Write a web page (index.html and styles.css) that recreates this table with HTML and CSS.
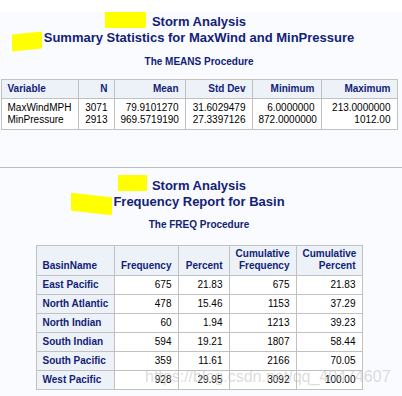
FILE: index.html
```html
<!DOCTYPE html>
<html>
<head>
<meta charset="utf-8">
<link rel="stylesheet" href="styles.css">
</head>
<body>
<div class="topstrip"></div>
<div class="page">
  <section class="block block-means">
    <div class="titles">
      <div class="title">Storm Analysis</div>
      <div class="title">Summary Statistics for MaxWind and MinPressure</div>
    </div>
    <div class="proc">The MEANS Procedure</div>
    <table class="tbl means">
      <colgroup>
        <col class="m1"><col class="m2"><col class="m3"><col class="m4"><col class="m5"><col class="m6">
      </colgroup>
      <thead>
        <tr>
          <th class="l">Variable</th>
          <th class="r">N</th>
          <th class="r">Mean</th>
          <th class="r">Std Dev</th>
          <th class="r">Minimum</th>
          <th class="r">Maximum</th>
        </tr>
      </thead>
      <tbody>
        <tr>
          <td class="l">MaxWindMPH<br>MinPressure</td>
          <td class="r">3071<br>2913</td>
          <td class="r">79.9101270<br>969.5719190</td>
          <td class="r">31.6029479<br>27.3397126</td>
          <td class="r">6.0000000<br>872.0000000</td>
          <td class="r">213.0000000<br>1012.00</td>
        </tr>
      </tbody>
    </table>
  </section>

  <hr class="sep">

  <section class="block block-freq">
    <div class="titles">
      <div class="title">Storm Analysis</div>
      <div class="title">Frequency Report for Basin</div>
    </div>
    <div class="proc">The FREQ Procedure</div>
    <table class="tbl freq">
      <colgroup>
        <col class="f1"><col class="f2"><col class="f3"><col class="f4"><col class="f5">
      </colgroup>
      <thead>
        <tr>
          <th class="l">BasinName</th>
          <th class="r">Frequency</th>
          <th class="r">Percent</th>
          <th class="r">Cumulative<br>Frequency</th>
          <th class="r">Cumulative<br>Percent</th>
        </tr>
      </thead>
      <tbody>
        <tr><th class="l rowh">East Pacific</th><td class="r">675</td><td class="r">21.83</td><td class="r">675</td><td class="r">21.83</td></tr>
        <tr><th class="l rowh">North Atlantic</th><td class="r">478</td><td class="r">15.46</td><td class="r">1153</td><td class="r">37.29</td></tr>
        <tr><th class="l rowh">North Indian</th><td class="r">60</td><td class="r">1.94</td><td class="r">1213</td><td class="r">39.23</td></tr>
        <tr><th class="l rowh">South Indian</th><td class="r">594</td><td class="r">19.21</td><td class="r">1807</td><td class="r">58.44</td></tr>
        <tr><th class="l rowh">South Pacific</th><td class="r">359</td><td class="r">11.61</td><td class="r">2166</td><td class="r">70.05</td></tr>
        <tr><th class="l rowh">West Pacific</th><td class="r">928</td><td class="r">29.95</td><td class="r">3092</td><td class="r">100.00</td></tr>
      </tbody>
    </table>
  </section>
</div>

<span class="mark mark-a"></span>
<span class="mark mark-b"></span>
<span class="mark mark-c"></span>
<span class="mark mark-d"></span>
<div class="watermark">https://blog.csdn.net/qq_40474607</div>
</body>
</html>
```

FILE: styles.css
```css
html, body {
  margin: 0;
  padding: 0;
}
body {
  position: relative;
  background: #fafbfe;
  font-family: "Liberation Sans", Arial, sans-serif;
  color: #000;
  height: 396px;
  overflow: hidden;
}
.topstrip {
  height: 12px;
  background: #ffffff;
}
.page {
  width: 398px;
}
.block {
  display: flex;
  flex-direction: column;
  align-items: center;
}
.titles {
  text-align: center;
  color: #112277;
  font-weight: bold;
  font-size: 13px;
  line-height: 16px;
}
.block-means .titles { padding-top: 2px; }
.block-freq .titles { padding-top: 10px; }
.proc {
  color: #112277;
  font-weight: bold;
  font-size: 10px;
  line-height: 12px;
  text-align: center;
}
.block-means .proc { margin-top: 10px; }
.block-freq .proc { margin-top: 9px; }

.tbl {
  border-collapse: collapse;
  table-layout: fixed;
  font-size: 10px;
  line-height: 12px;
  background: #ffffff;
}
.tbl th, .tbl td {
  border: 1px solid #c1c1c1;
  padding: 3px 6px;
  white-space: nowrap;
  overflow: hidden;
}
.tbl th {
  background: #edf2f9;
  color: #112277;
  font-weight: bold;
}
.tbl td {
  color: #000;
  font-weight: normal;
}
.l { text-align: left; }
.r { text-align: right; }

.means {
  margin-top: 11px;
  width: 396px;
}
.m1 { width: 77px; }
.m2 { width: 36px; }
.m3 { width: 71px; }
.m4 { width: 67px; }
.m5 { width: 69px; }
.m6 { width: 76px; }

.freq {
  margin-top: 14px;
  width: 326px;
}
.freq thead th {
  vertical-align: bottom;
  padding: 2px 6px 3px;
}
.f1 { width: 78px; }
.f2 { width: 64px; }
.f3 { width: 51px; }
.f4 { width: 67px; }
.f5 { width: 66px; }

.sep {
  margin: 37px 0 0;
  border: 0;
  border-top: 1px solid #bdbdbd;
  height: 0;
  width: 402px;
}

.mark {
  position: absolute;
  background: #ffff00;
  display: block;
}
.mark-a { left: 105px; top: 12px; width: 41px; height: 16px; }
.mark-b { left: 12px; top: 33px; width: 30px; height: 17px; transform: skewY(-6deg); }
.mark-c { left: 118px; top: 175px; width: 29px; height: 16px; }
.mark-d { left: 71px; top: 195px; width: 41px; height: 18px; transform: skewY(6deg); }

.watermark {
  position: absolute;
  left: 145px;
  top: 369px;
  font-size: 16px;
  line-height: 16px;
  color: rgba(190, 190, 190, 0.55);
  white-space: nowrap;
  pointer-events: none;
}
```
